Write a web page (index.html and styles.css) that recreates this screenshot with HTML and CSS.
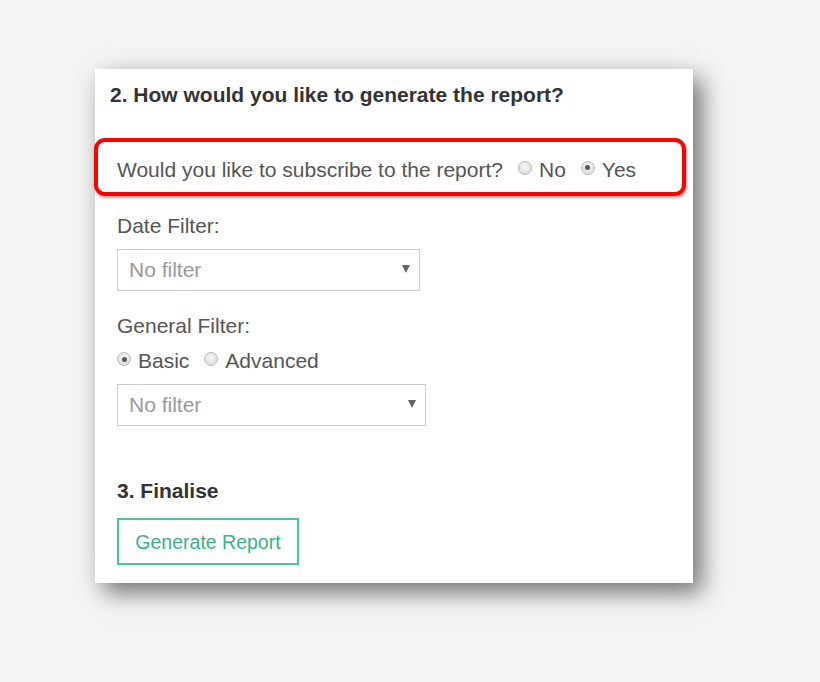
FILE: index.html
```html
<!DOCTYPE html>
<html>
<head>
<meta charset="utf-8">
<link rel="stylesheet" href="styles.css">
</head>
<body>
<div class="stage">
  <div class="card">
    <h2 class="heading">2. How would you like to generate the report?</h2>
    <div class="highlight">
      <span class="q">Would you like to subscribe to the report?</span>
      <span class="opt"><span class="radio"></span>No</span>
      <span class="opt"><span class="radio checked"></span>Yes</span>
    </div>
    <div class="body">
      <div class="label">Date Filter:</div>
      <div class="select s1"><span>No filter</span><span class="arrow"></span></div>
      <div class="label gen">General Filter:</div>
      <div class="radios">
        <span class="opt"><span class="radio checked"></span>Basic</span>
        <span class="opt"><span class="radio"></span>Advanced</span>
      </div>
      <div class="select s2"><span>No filter</span><span class="arrow"></span></div>
      <h3 class="heading3">3. Finalise</h3>
      <div class="btn">Generate Report</div>
    </div>
  </div>
</div>
</body>
</html>
```
FILE: styles.css
```css
html, body {
  margin: 0;
  padding: 0;
  background: #f4f4f4;
  font-family: "Liberation Sans", Arial, sans-serif;
}
.stage {
  width: 820px;
  height: 682px;
  padding: 69px 0 0 95px;
  box-sizing: border-box;
}
.card {
  width: 598px;
  height: 514px;
  background: #fff;
  box-shadow: 9px 10px 22px rgba(0,0,0,0.5), 0 0 30px rgba(0,0,0,0.05);
  display: flex;
  flex-direction: column;
}
.heading {
  margin: 14px 0 0 15px;
  font-size: 21px;
  font-weight: bold;
  color: #333;
  line-height: 24px;
}
.highlight {
  margin: 31px 7px 0 -1px;
  height: 58px;
  box-sizing: border-box;
  border: 4px solid #ff0000;
  border-radius: 11px;
  box-shadow: 1px 2px 3px rgba(0,0,0,0.35);
  display: flex;
  align-items: center;
  padding: 5px 0 0 19px;
  font-size: 21px;
  line-height: 24px;
  color: #555;
}
.q { margin-right: 15px; }
.opt {
  display: inline-flex;
  align-items: center;
  margin-right: 15px;
}
.radio {
  width: 12px;
  height: 12px;
  border-radius: 50%;
  border: 1px solid #b8b8b8;
  background: radial-gradient(circle at 50% 40%, #f6f6f6, #d6d6d6);
  margin-right: 7px;
  margin-top: -4px;
  position: relative;
  box-sizing: content-box;
}
.radio.checked::after {
  content: "";
  position: absolute;
  left: 3.5px;
  top: 3.5px;
  width: 5px;
  height: 5px;
  border-radius: 50%;
  background: #555;
}
.body {
  padding-left: 22px;
  color: #555;
  font-size: 21px;
  line-height: 24px;
}
.label {
  margin-top: 18px;
}
.label.gen { margin-top: 23px; }
.select {
  margin-top: 11px;
  height: 42px;
  box-sizing: border-box;
  border: 1px solid #ccc;
  display: flex;
  align-items: center;
  justify-content: space-between;
  padding: 0 9px 0 11px;
  color: #999;
}
.s1 { width: 303px; }
.s2 { width: 309px; }
.arrow {
  width: 0;
  height: 0;
  border-left: 4.5px solid transparent;
  border-right: 4.5px solid transparent;
  border-top: 8px solid #666;
  margin-top: -3px;
}
.radios {
  margin-top: 11px;
  display: flex;
}
.radios .opt { margin-right: 15px; }
.heading3 {
  margin: 53px 0 0 0;
  font-size: 21px;
  font-weight: bold;
  color: #333;
  line-height: 24px;
}
.btn {
  margin-top: 15px;
  width: 182px;
  height: 47px;
  box-sizing: border-box;
  border: 2px solid #4cc39b;
  color: #3cb08a;
  display: flex;
  align-items: center;
  justify-content: center;
  font-size: 19.5px;
}
```
